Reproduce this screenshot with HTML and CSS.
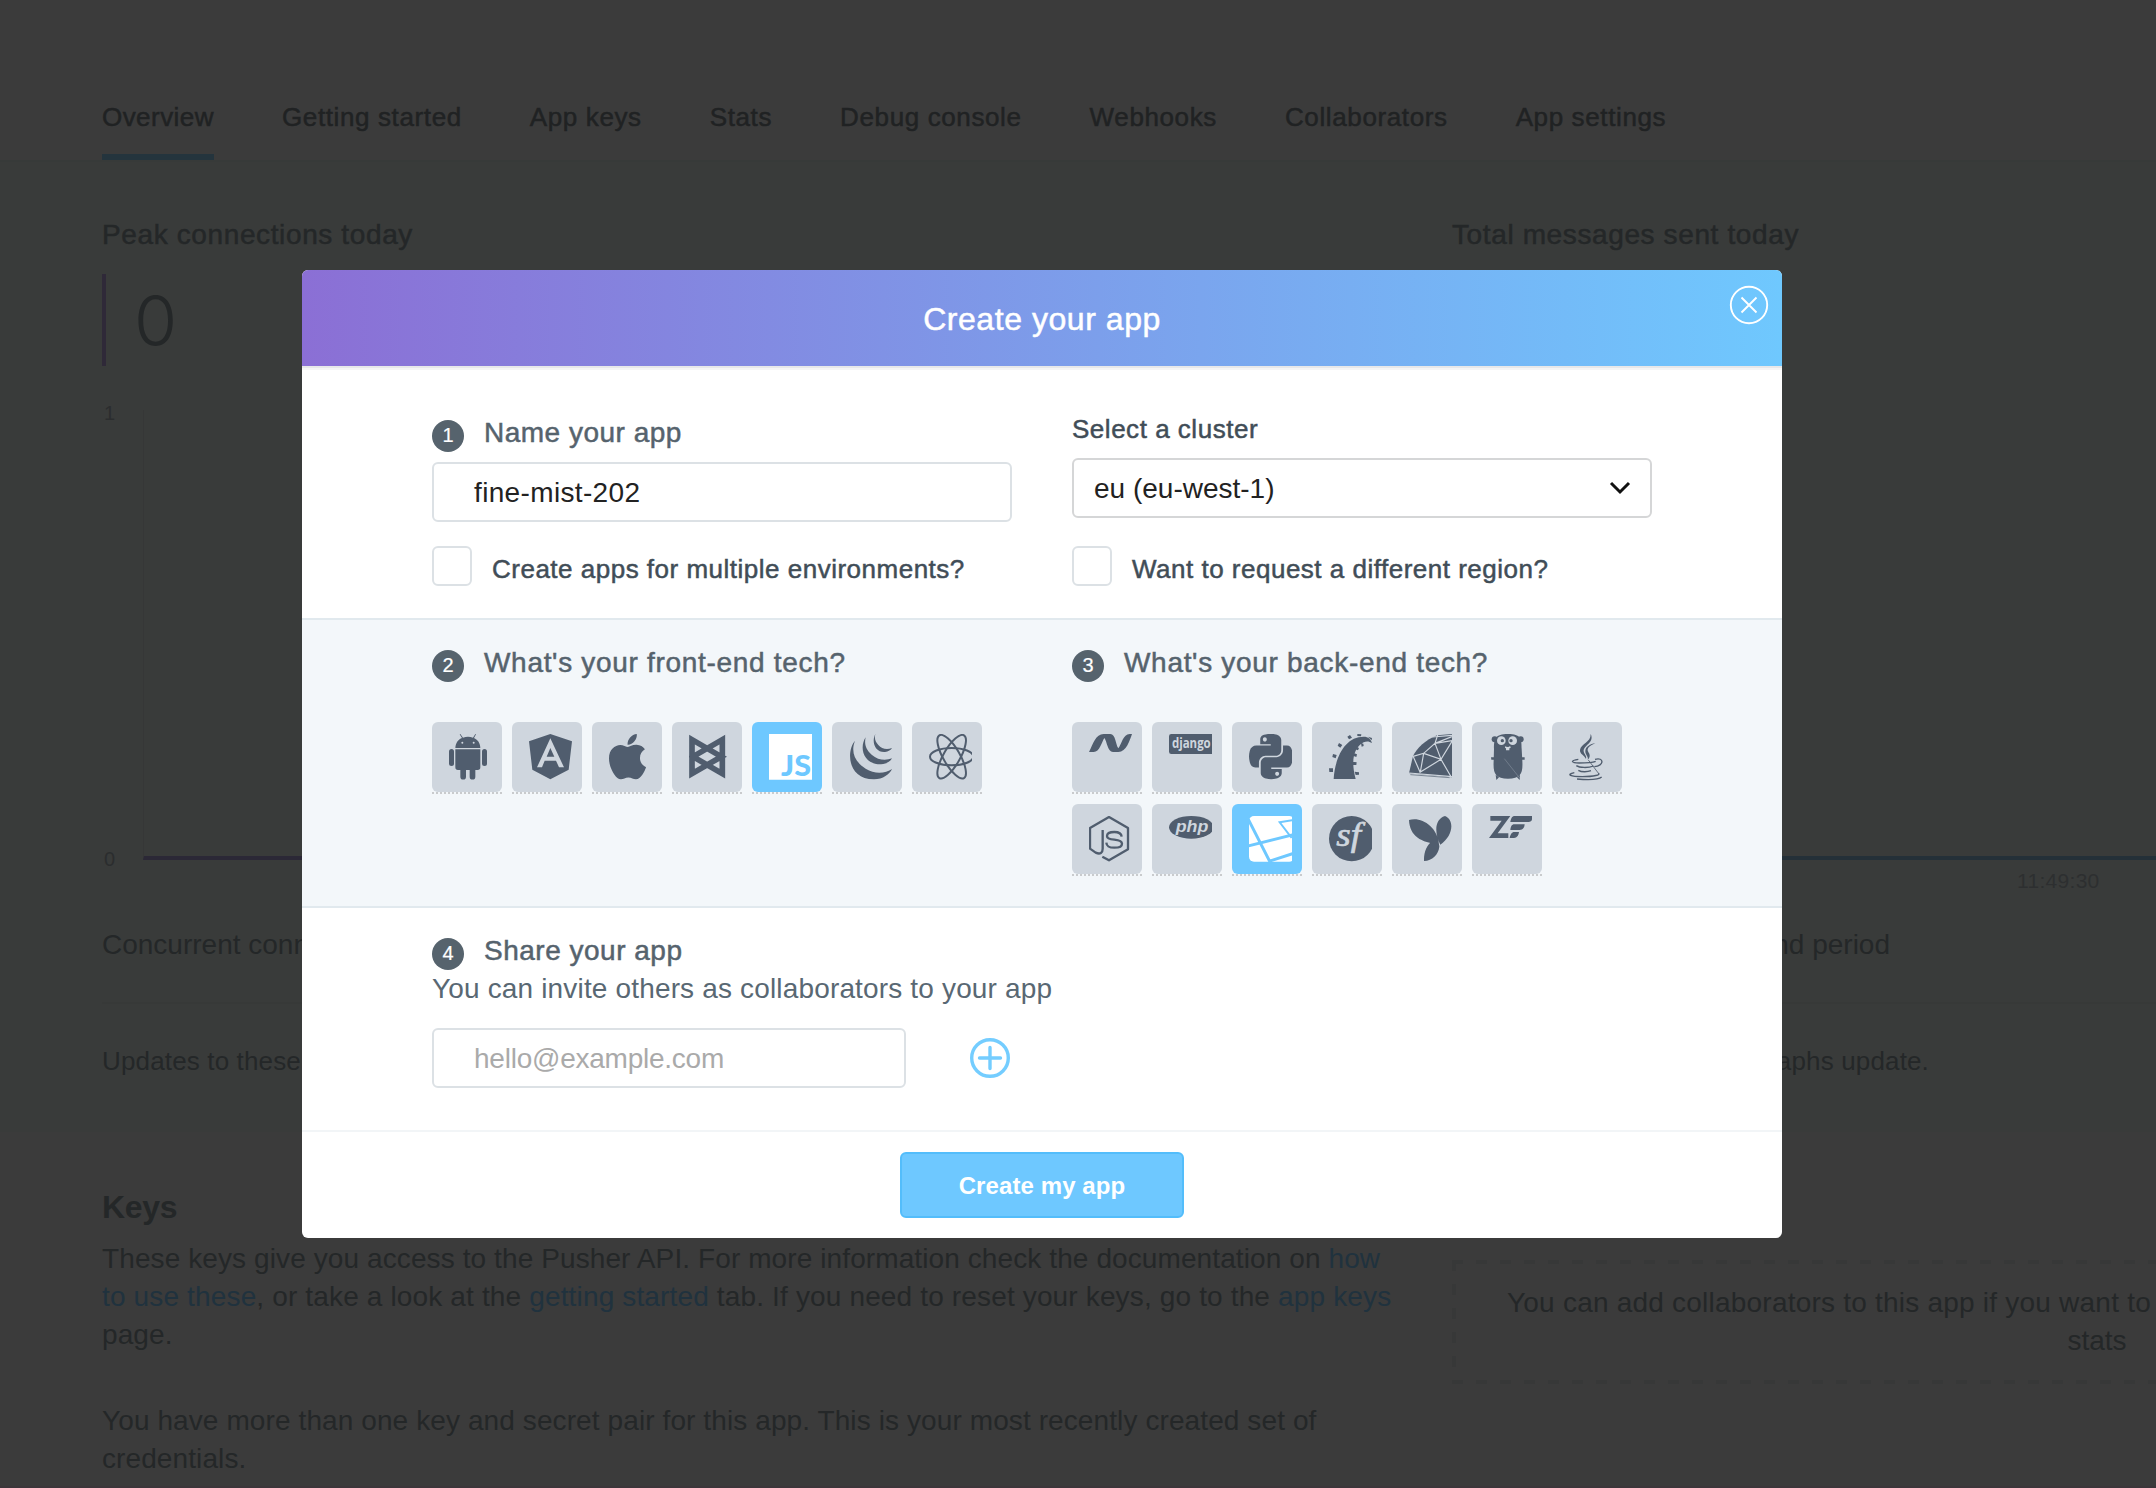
FILE: index.html
```html
<!DOCTYPE html>
<html lang="en">
<head>
<meta charset="utf-8">
<title>Create your app</title>
<link rel="stylesheet" href="styles.css">
</head>
<body>
<div class="page">
  <nav class="tabs">
    <a class="tab tab-active">Overview</a>
    <a class="tab">Getting started</a>
    <a class="tab">App keys</a>
    <a class="tab">Stats</a>
    <a class="tab">Debug console</a>
    <a class="tab">Webhooks</a>
    <a class="tab">Collaborators</a>
    <a class="tab">App settings</a>
  </nav>

  <section class="stats">
    <div class="stat">
      <h3 class="stat-title">Peak connections today</h3>
      <div class="stat-value">0</div>
      <div class="chart">
        <div class="axis"><span>1</span><span>0</span></div>
        <div class="plot plot-purple"></div>
      </div>
      <div class="time"></div>
      <p class="stat-note">Concurrent conn</p>
      <p class="stat-update">Updates to these</p>
    </div>
    <div class="stat">
      <h3 class="stat-title">Total messages sent today</h3>
      <div class="stat-value stat-value-blue"></div>
      <div class="chart">
        <div class="axis"></div>
        <div class="plot plot-blue"></div>
      </div>
      <div class="time">11:49:30</div>
      <p class="stat-note"><span class="note-end">second period</span></p>
      <p class="stat-update"><span class="update-end">graphs update.</span></p>
    </div>
  </section>

  <section class="lower">
    <div class="keys">
      <h2 class="keys-title">Keys</h2>
      <p class="copy">These keys give you access to the Pusher API. For more information check the documentation on <a>how</a><br><span class="line-wide"><a>to use these</a>, or take a look at the <a>getting started</a> tab. If you need to reset your keys, go to the <a>app keys</a></span><br>page.</p>
      <p class="copy copy-second">You have more than one key and secret pair for this app. This is your most recently created set of<br>credentials.</p>
    </div>
    <div class="collab-box">
      <p class="collab-line">You can add collaborators to this app if you want to</p>
      <p class="collab-last">stats</p>
    </div>
  </section>
  <div class="page-end"></div>
</div>

<div class="modal">
  <header class="modal-head">
    <h1 class="modal-title">Create your app</h1>
    <svg class="close" viewBox="0 0 40 40"><circle cx="20" cy="20" r="18.2"/><path d="M12.5 12.5 27.5 27.5M27.5 12.5 12.5 27.5"/></svg>
  </header>

  <section class="row row-name">
    <div class="col">
      <h2 class="step"><span class="num">1</span>Name your app</h2>
      <div class="field field-name">fine-mist-202</div>
      <label class="check check-left"><span class="box"></span>Create apps for multiple environments?</label>
    </div>
    <div class="col">
      <div class="label">Select a cluster</div>
      <div class="field field-select">eu (eu-west-1)<svg class="chevron" viewBox="0 0 24 16"><path d="M3 3 12 12 21 3"/></svg></div>
      <label class="check check-right"><span class="box"></span>Want to request a different region?</label>
    </div>
  </section>

  <section class="row row-tech">
    <div class="col">
      <h2 class="step step-wide"><span class="num">2</span>What's your front-end tech?</h2>
      <div class="tiles">
        <div class="tile"><div class="face"><svg class="icon" viewBox="0 0 129 144"><path d="M19 42C20 25 29 16 39 12L32 1 34 0 42 11Q57 6 72 11L79 0 81 1 75 12C85 17 94 26 94 42ZM19 46H94V100Q94 108 86 108H79V128A8.500 8.500 0 0 1 62 128V108H51V128A8.500 8.500 0 0 1 34 128V108H27Q19 108 19 100Z"/><rect x="0" y="45" width="15" height="51" rx="7.500"/><rect x="99" y="45" width="15" height="51" rx="7.500"/><g class="lite"><circle cx="40" cy="26" r="3"/><circle cx="74" cy="26" r="3"/></g></svg></div></div>
        <div class="tile"><div class="face"><svg class="icon" viewBox="0 0 129 144"><path fill-rule="evenodd" d="M64 0 129 22 119 107 64 136 10 107 0 22ZM64 13 24 100H39L47 80H81L90 100H105ZM64 42 76 68H53Z"/></svg></div></div>
        <div class="tile"><div class="face"><svg class="icon" viewBox="0 0 129 144"><path transform="scale(.2955 .3036) translate(-4 -32)" d="M318.700 268.700c-.2-36.700 16.400-64.400 50-84.800-18.800-26.900-47.200-41.700-84.700-44.600-35.500-2.800-74.300 20.700-88.500 20.700-15 0-49.400-19.700-76.400-19.700C63.300 141.200 4 184.800 4 273.500q0 39.300 14.400 81.200c12.800 36.700 59 126.700 107.200 125.200 25.200-.6 43-17.900 75.800-17.900 31.800 0 48.300 17.900 76.400 17.900 48.600-.7 90.400-82.500 102.600-119.300-65.200-30.700-61.700-90-61.700-91.900zm-56.600-164.200c27.300-32.400 24.800-61.900 24-72.500-24.100 1.400-52 16.400-67.900 34.900-17.500 19.800-27.800 44.300-25.600 71.900 26.100 2 49.900-11.400 69.500-34.300z"/></svg></div></div>
        <div class="tile"><div class="face"><svg class="icon" viewBox="0 0 129 144"><path class="line" stroke-width="17" d="M9 17 97 68 9 119ZM100 17 12 68 100 119Z"/></svg></div></div>
        <div class="tile tile-on"><div class="face"><svg class="icon" viewBox="0 0 129 144"><path d="M0 0H129V137H0Z"/><text class="lite js-text" x="36" y="125" textLength="90" lengthAdjust="spacingAndGlyphs">JS</text></svg></div></div>
        <div class="tile"><div class="face"><svg class="icon" viewBox="0 0 129 144"><path d="M18 20C-8 50 -6 136 75 136 102 136 122 120 129 105 110 118 78 122 50 104 14 82 6 50 18 20ZM50 10C30 40 42 92 96 91 112 90 124 83 129 73 112 80 88 80 68 62 48 44 46 26 50 10ZM79 0C66 26 80 56 108 54 118 53 126 48 129 42 112 48 98 44 88 33 78 22 76 12 79 0Z"/></svg></div></div>
        <div class="tile"><div class="face"><svg class="icon" viewBox="0 0 129 144"><g class="line" stroke-width="6"><ellipse cx="68" cy="68" rx="65" ry="26"/><ellipse cx="68" cy="68" rx="74" ry="25" transform="rotate(60 68 68)"/><ellipse cx="68" cy="68" rx="74" ry="25" transform="rotate(120 68 68)"/></g></svg></div></div>
      </div>
    </div>
    <div class="col">
      <h2 class="step step-wide"><span class="num">3</span>What's your back-end tech?</h2>
      <div class="tiles">
        <div class="tile"><div class="face"><svg class="icon" viewBox="0 0 129 144"><path d="M0 54C12 30 20 0 44 0H64C80 0 80 32 88 43 98 30 102 0 122 0H129C122 20 112 54 88 54H72C56 54 54 22 46 12 38 24 32 54 14 54Z"/></svg></div></div>
        <div class="tile"><div class="face"><svg class="icon" viewBox="0 0 129 144"><rect width="140" height="60" rx="7"/><text class="lite django-text" x="9" y="41" textLength="116" lengthAdjust="spacingAndGlyphs">django</text></svg></div></div>
        <div class="tile"><div class="face"><svg class="icon" viewBox="0 0 129 144"><path transform="scale(.295 .3036) translate(0 -32)" d="M439.800 200.500c-7.700-30.900-22.300-54.200-53.400-54.200h-40.100v47.400c0 36.800-31.200 67.800-66.800 67.800H172.700c-29.200 0-53.400 25-53.400 54.300v101.800c0 29 25.200 46 53.400 54.300 33.800 9.900 66.300 11.700 106.800 0 26.900-7.800 53.400-23.500 53.400-54.300v-40.700H226.200v-13.600h160.200c31.100 0 42.600-21.700 53.400-54.200 11.200-33.500 10.700-65.700 0-108.600zM286.200 404c11.100 0 20.100 9.100 20.100 20.300 0 11.300-9 20.400-20.100 20.400-11 0-20.100-9.200-20.100-20.400.1-11.300 9.100-20.300 20.100-20.300zM167.800 248.100h106.800c29.700 0 53.400-24.500 53.400-54.300V91.900c0-29-24.400-50.700-53.400-55.600-35.800-5.900-74.700-5.600-106.800.1-45.200 8-53.400 24.700-53.400 55.600v40.700h106.900v13.600h-147c-31.100 0-58.300 18.700-66.800 54.200-9.800 40.700-10.200 66.100 0 108.600 7.600 31.600 25.700 54.200 56.800 54.200H101v-48.800c0-35.300 30.500-66.400 66.800-66.400zm-6.700-142.600c-11.100 0-20.100-9.100-20.100-20.300.1-11.300 9-20.400 20.100-20.400 11 0 20.100 9.200 20.100 20.400s-9 20.300-20.100 20.300z"/></svg></div></div>
        <div class="tile"><div class="face"><svg class="icon" viewBox="0 0 129 144"><path d="M14 135C18 70 48 8 104 8 118 8 126 16 129 27 120 21 112 21 104 25 72 42 66 84 80 135ZM0 103H12V114H1ZM12 60 23 63 20 73 10 69ZM30 27 40 33 34 41 26 35ZM55 8 63 3 69 11 60 16ZM85 0 97 1 96 7 85 6ZM117 8 129 12 128 19ZM96 28 103 29 104 36 98 38ZM83 38 90 42 87 49 80 46ZM74 57 84 61 82 69 72 65ZM72 83 83 85 82 93 73 92ZM77 113 90 115 90 122 80 123Z"/></svg></div></div>
        <div class="tile"><div class="face"><svg class="icon" viewBox="0 0 129 144"><path d="M129 0 84 4C50 18 24 42 12 66L0 118 129 130Z"/><path class="litel" stroke-width="3.500" d="M10 68 44 58 78 28 129 20M70 9 129 4M78 28 86 3M78 28 129 8M44 58 96 76 129 22M78 28 96 76M44 58 34 114 96 76 127 130M12 66 34 116M0 117 129 128"/><path class="line" stroke-width="2" d="M4 122 122 131"/></svg></div></div>
        <div class="tile"><div class="face"><svg class="icon" viewBox="0 0 129 144"><path d="M15 45C15 14 18 0 57 0S98 14 98 45L100 80C102 118 96 134 57 134S12 118 14 80Z"/><circle cx="17" cy="16" r="9"/><circle cx="95" cy="16" r="9"/><path d="M6 70H16V77H7ZM98 70H107V77H98ZM20 122 30 130 22 138ZM84 130 93 122 92 138Z"/><g class="lite"><circle cx="37" cy="20" r="13"/><circle cx="71" cy="20" r="13"/><path d="M48 38Q56 32 65 38Q66 43 61 43V49H51V43Q47 43 48 38Z"/></g><circle cx="40" cy="20" r="5"/><circle cx="66" cy="20" r="5"/><ellipse cx="56" cy="35" rx="6" ry="4"/><path class="litel" stroke-width="1.500" opacity=".5" d="M46 74 92 132"/></svg></div></div>
        <div class="tile"><div class="face"><svg class="icon" viewBox="0 0 129 144"><path d="M65 0C78 26 42 34 44 52 46 62 54 66 51 75 46 64 32 60 33 48 36 28 66 26 65 0ZM79 28C60 36 52 44 58 54 64 62 64 70 56 78 60 68 48 62 49 50 50 38 64 30 79 28Z"/><g class="line" stroke-width="4"><path d="M28 76C4 80 4 86 30 87 54 87 70 86 80 82M78 76C106 68 106 96 76 98M22 95C32 102 58 102 74 96M28 109C38 115 56 114 66 110M16 116C-10 122 4 128 40 128 76 128 96 122 88 118M24 135C60 138 90 136 98 129" /><path stroke-width="2.500" d="M58 78 90 120"/></g></svg></div></div>
        <div class="tile"><div class="face"><svg class="icon" viewBox="0 0 129 144"><path class="line" stroke-width="7" stroke-linejoin="round" d="M40 122 60 133 117 100V36L60 3 3 36V98L20 110C34 116 41 110 41 98V42M98 62C97 51 90 48 76 48 62 48 54 52 54 60 54 68 62 70 76 71 92 73 99 76 99 83 99 92 90 95 76 95 60 95 53 92 52 80"/></svg></div></div>
        <div class="tile"><div class="face"><svg class="icon" viewBox="0 0 129 144"><ellipse cx="67" cy="34" rx="67" ry="34"/><text class="lite php-text" x="20" y="47" textLength="98" lengthAdjust="spacingAndGlyphs">php</text></svg></div></div>
        <div class="tile tile-on"><div class="face"><svg class="icon" viewBox="0 0 129 144"><rect width="136" height="137" rx="15"/><path class="litel" stroke-width="9" d="M-2 10 64 140M-4 90 134 56M60 136 134 112"/><path class="litel" stroke-width="6" d="M134 12 92 19 128 66"/></svg></div></div>
        <div class="tile"><div class="face"><svg class="icon" viewBox="0 0 129 144"><circle cx="68" cy="68" r="68"/><text class="lite sf-text" x="22" y="91" textLength="74" lengthAdjust="spacingAndGlyphs">sf</text></svg></div></div>
        <div class="tile"><div class="face"><svg class="icon" viewBox="0 0 129 144"><path d="M0 12C34 0 86 30 90 85 36 80 2 60 0 12ZM108 0C138 12 132 60 94 86 76 50 76 10 108 0ZM70 75C82 76 92 80 91 92 88 116 70 134 45 135 44 108 54 86 70 75Z"/></svg></div></div>
        <div class="tile"><div class="face"><svg class="icon" viewBox="0 0 129 144"><path d="M4 0H64L26 52H58V66H0L38 14H4ZM78 0H129V10Q128 18 118 18H64C66 8 68 0 78 0ZM76 25H107C106 36 102 41 92 42H64C65 32 68 25 76 25ZM76 48H90C88 60 84 66 70 66H62C64 56 68 48 76 48Z"/></svg></div></div>
      </div>
    </div>
  </section>

  <section class="share">
    <h2 class="step"><span class="num">4</span>Share your app</h2>
    <p class="share-copy">You can invite others as collaborators to your app</p>
    <div class="invite">
      <div class="field field-mail">hello@example.com</div>
      <svg class="plus" viewBox="0 0 40 40"><circle cx="20" cy="20" r="18.300"/><path d="M20 9.500V30.500M9.500 20H30.500"/></svg>
    </div>
  </section>

  <footer class="modal-foot">
    <button class="submit">Create my app</button>
  </footer>
</div>
</body>
</html>
```
FILE: styles.css
```css
* { box-sizing: border-box; }
html, body { margin: 0; height: 1488px; overflow: hidden; }
body {
  position: relative;
  font-family: "Liberation Sans", Arial, sans-serif;
  background: #3b3b3b;
  color: #242728;
}
h1, h2, h3, p { margin: 0; font-weight: normal; }

.page { width: 2156px; height: 1488px; overflow: hidden; display: flex; flex-direction: column; }

.tabs {
  height: 162px;
  flex: none;
  display: flex;
  align-items: flex-end;
  gap: 68px;
  padding-left: 102px;
  border-bottom: 2px solid #373a39;
}
.tab {
  font-size: 26px;
  line-height: 40px;
  letter-spacing: .62px;
  -webkit-text-stroke: .5px;
  padding-bottom: 17px;
  border-bottom: 6px solid transparent;
  color: #202223;
}
.tab-active { border-color: #24343d; letter-spacing: .45px; }

.stats {
  height: 970px;
  flex: none;
  display: grid;
  grid-template-columns: 1290px 1290px;
  column-gap: 60px;
  padding: 53px 0 0 102px;
  background: #393b3a;
}
.stat-title {
  font-size: 28px;
  line-height: 40px;
  letter-spacing: .62px;
  -webkit-text-stroke: .5px;
}
.stat-value {
  height: 92px;
  margin-top: 19px;
  padding-left: 28px;
  border-left: 4px solid #2f2938;
  font: 300 70px/94px Inter, sans-serif;
}
.stat-value-blue { border-color: #24343d; }
.chart { display: flex; height: 466px; margin-top: 37px; }
.axis {
  width: 41px;
  display: flex;
  flex-direction: column;
  justify-content: space-between;
  padding-left: 2px;
  font-size: 20px;
  line-height: 20px;
  color: #2b2d2e;
}
.plot { flex: 1; height: 450px; margin-top: 7px; border-left: 1px solid #363737; border-bottom: 4px solid; }
.plot-purple { border-bottom-color: #2b2836; }
.plot-blue { border-bottom-color: #243038; }
.time {
  height: 20px;
  margin-top: 2px;
  padding-left: 565px;
  font-size: 21px;
  line-height: 20px;
  letter-spacing: .3px;
  color: #2d2f30;
}
.stat-note {
  height: 80px;
  margin-top: 33px;
  border-bottom: 2px solid #373938;
  font-size: 28px;
  line-height: 42px;
}
.stat-update { margin-top: 37px; font-size: 26px; line-height: 40px; letter-spacing: .15px; }
.note-end { display: block; width: 438px; text-align: right; }
.update-end { display: block; width: 477px; text-align: right; }

.lower {
  flex: 1;
  display: grid;
  grid-template-columns: 1290px 1290px;
  column-gap: 60px;
  padding-left: 102px;
}
.keys { padding-top: 55px; white-space: nowrap; }
.keys-title { font-size: 32px; font-weight: bold; line-height: 40px; letter-spacing: -.3px; }
.copy { margin-top: 13px; font-size: 28px; line-height: 38px; letter-spacing: .1px; }
.copy a { color: #20323e; }
.line-wide { letter-spacing: .15px; }
.copy-second { margin-top: 48px; }
/* long dashes: 11px on, 13px off along every side */
.collab-box {
  height: 124px;
  margin-top: 128px;
  padding: 24px 4px 0;
  background:
    repeating-linear-gradient(to right, #373838 0 11px, transparent 11px 24px) top / 100% 4px no-repeat,
    repeating-linear-gradient(to right, #373838 0 11px, transparent 11px 24px) bottom / 100% 4px no-repeat,
    repeating-linear-gradient(to bottom, #373838 0 11px, transparent 11px 24px) left / 4px 100% no-repeat;
  font-size: 28px;
  line-height: 38px;
}
.collab-line { padding-left: 51px; letter-spacing: .22px; white-space: nowrap; }
.collab-last { text-align: center; }
.page-end { height: 2px; flex: none; background: #3c363a; }

/* dialog over the dimmed dashboard */
.modal {
  position: absolute;
  left: 302px;
  top: 270px;
  width: 1480px;
  height: 968px;
  display: flex;
  flex-direction: column;
  border-radius: 6px;
  overflow: hidden;
  background: #fff;
  color: #414d57;
}
.modal-head {
  position: relative;
  height: 96px;
  flex: none;
  background: linear-gradient(to right, #8b6fd5, #6fc8fe);
  box-shadow: 0 2px 0 #e7e8ea, 0 4px 0 #f5f5f6;
  text-align: center;
  color: #fff;
}
.modal-title { font-size: 32px; line-height: 99px; letter-spacing: .55px; -webkit-text-stroke: .5px; }
.close { position: absolute; right: 13px; top: 15px; width: 40px; height: 40px; fill: none; stroke: #fff; stroke-width: 1.900; }

.row { display: grid; grid-template-columns: 580px 580px; column-gap: 60px; padding-left: 130px; flex: none; border-bottom: 2px solid #e1e9ee; }
.row-name { height: 254px; padding-top: 52px; }
.row-tech { height: 288px; padding-top: 28px; background: #f3f7fa; }
.step {
  display: flex;
  align-items: flex-start;
  height: 36px;
  gap: 20px;
  font-size: 28px;
  line-height: 30px;
  letter-spacing: .5px;
  -webkit-text-stroke: .5px;
  color: #56636d;
}
.step-wide { letter-spacing: .69px; }
.num {
  width: 32px;
  height: 32px;
  margin-top: 2px;
  border-radius: 50%;
  background: #56636d;
  color: #fff;
  font-size: 20px;
  line-height: 31px;
  letter-spacing: 0;
  -webkit-text-stroke: .2px;
  text-align: center;
}
.field {
  height: 60px;
  border: 2px solid #dce1e5;
  border-radius: 6px;
  background: #fff;
  font-size: 28px;
  line-height: 58px;
  color: #222;
}
.field-name { margin-top: 8px; padding-left: 40px; letter-spacing: .35px; }
.label { height: 40px; line-height: 22px; font-size: 26px; letter-spacing: .52px; -webkit-text-stroke: .5px; }
.field-select { display: flex; justify-content: space-between; border-color: #d5d6d7; padding: 0 18px 0 20px; }
.chevron { width: 24px; height: 16px; margin-top: 20px; fill: none; stroke: #111; stroke-width: 3; }
.check { display: flex; gap: 20px; font-size: 26px; line-height: 47px; height: 40px; letter-spacing: .5px; -webkit-text-stroke: .5px; }
.check-left { margin-top: 24px; }
.check-right { margin-top: 28px; }
.box { width: 40px; height: 40px; border: 2px solid #dce1e5; border-radius: 6px; background: #fff; }

.tiles { display: flex; flex-wrap: wrap; gap: 10px; margin-top: 36px; padding-top: 2px; }
.tile { width: 70px; height: 72px; background: repeating-linear-gradient(to right, #c9cbcd 0 2px, transparent 2px 4px) bottom / 100% 2px no-repeat; }
.face { height: 70px; padding: 12px 0 0 17px; border-radius: 6px; background: #cfd6de; }
.tile-on .face { background: #6ec8ff; }
.icon { display: block; width: 43px; height: 48px; fill: #505d6e; }
.line { fill: none; stroke: #505d6e; }
.lite { fill: #cfd6de; }
.litel { fill: none; stroke: #cfd6de; }
.tile-on .icon { fill: #fff; }
.tile-on .lite { fill: #6ec8ff; }
.tile-on .litel { stroke: #6ec8ff; }
.js-text { font: 900 87px Lato, sans-serif; }
.django-text { font: 700 40px "Open Sans", sans-serif; }
.php-text { font: italic bold 50px "Liberation Sans", sans-serif; }
.sf-text { font: italic 98px "Liberation Serif", serif; stroke: #cfd6de; stroke-width: 2px; }

.share { height: 224px; flex: none; padding: 28px 0 0 130px; border-bottom: 2px solid #f2f5f7; }
.share-copy { font-size: 28px; line-height: 38px; margin-top: -2px; letter-spacing: .16px; color: #596873; }
.invite { display: flex; align-items: center; margin-top: 20px; gap: 64px; }
.field-mail { width: 474px; padding-left: 40px; letter-spacing: -.24px; color: #aaa; }
.plus { width: 40px; height: 40px; fill: none; stroke: #74cdff; stroke-width: 3.400; stroke-linecap: round; }

.modal-foot { flex: 1; display: flex; justify-content: center; align-items: flex-start; padding-top: 20px; }
.submit {
  width: 284px;
  height: 66px;
  padding: 2px 0 0;
  border: 2px solid #53bdfb;
  border-radius: 6px;
  background: #6ec8ff;
  color: #fff;
  font: bold 24px "Liberation Sans", sans-serif;
  letter-spacing: .1px;
}
```
